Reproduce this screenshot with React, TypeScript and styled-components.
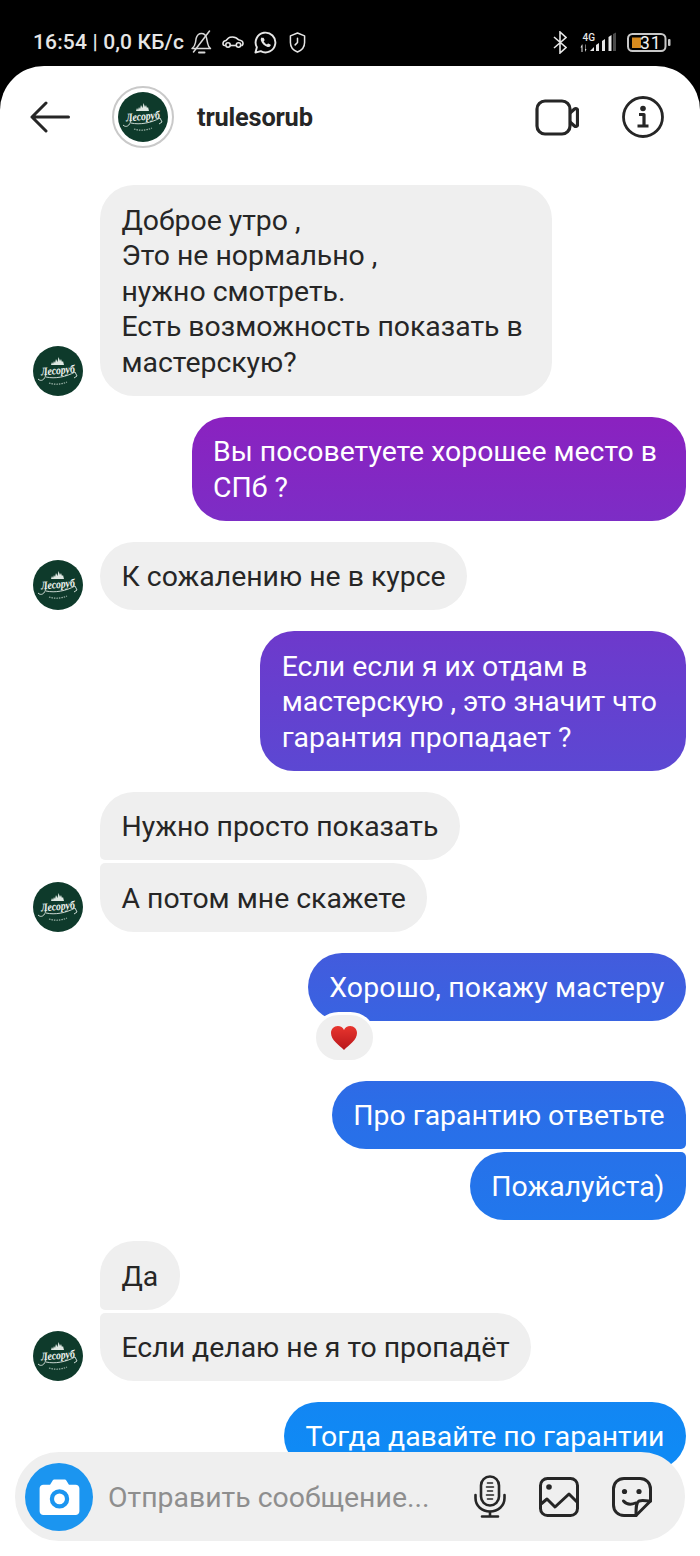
import React from 'react';
import styled, { createGlobalStyle } from 'styled-components';

const GlobalStyle = createGlobalStyle`
  html, body {
    margin: 0;
    padding: 0;
    background: #000;
  }
  * {
    box-sizing: border-box;
  }
`;

const Phone = styled.div`
  position: relative;
  width: 700px;
  height: 1556px;
  overflow: hidden;
  display: flex;
  flex-direction: column;
  background: #000;
  font-family: Roboto, 'Noto Sans', sans-serif;
`;

const StatusBar = styled.div`
  flex: none;
  height: 66px;
  padding: 18px 29px 0 33px;
  display: flex;
  align-items: center;
  color: #e6e6e6;
`;

const StatusText = styled.span`
  font-size: 21px;
  font-weight: 500;
  letter-spacing: 0.15px;
  white-space: nowrap;
  margin-right: 6px;
`;

const StatusIcons = styled.div`
  display: flex;
  align-items: center;
  gap: 10px;
`;

const StatusRight = styled.div`
  margin-left: auto;
  display: flex;
  align-items: center;
  gap: 13px;
`;

const Cellular = styled.div`
  display: flex;
  align-items: center;
  gap: 10px;
`;

const Screen = styled.div`
  flex: 1;
  min-height: 0;
  display: flex;
  flex-direction: column;
  background: #fff;
  border-radius: 44px 44px 0 0;
`;

const Header = styled.div`
  flex: none;
  height: 119.4px;
  padding: 0 36px 17px 30px;
  display: flex;
  align-items: center;
`;

const BackButton = styled.div`
  width: 40px;
  height: 32px;
  margin-right: 42px;
`;

const HeaderRing = styled.div`
  width: 62px;
  height: 62px;
  border-radius: 50%;
  border: 2px solid #c9c9c9;
  display: flex;
  align-items: center;
  justify-content: center;
  margin-right: 23px;
`;

const UserName = styled.span`
  font-size: 25.4px;
  font-weight: 700;
  color: #262626;
  letter-spacing: -0.2px;
`;

const HeaderActions = styled.div`
  margin-left: auto;
  display: flex;
  align-items: center;
  gap: 43px;
`;

const Thread = styled.div`
  flex: 1;
  min-height: 0;
  overflow: hidden;
  display: flex;
  flex-direction: column;
  padding: 0 14px 0 33px;
`;

const Group = styled.div<{ $sent?: boolean }>`
  flex: none;
  display: flex;
  flex-direction: column;
  gap: 3px;
  align-items: ${({ $sent }) => ($sent ? 'flex-end' : 'flex-start')};
  margin-bottom: 21px;
`;

const Row = styled.div`
  display: flex;
  align-items: flex-end;
  gap: 17px;
`;

const Spacer = styled.div`
  width: 50px;
  height: 0;
`;

const radius = (corner?: 'top' | 'bottom', sent?: boolean) => {
  const big = '34px';
  const small = '5px';
  if (sent) {
    return `${big} ${corner === 'top' ? small : big} ${corner === 'bottom' ? small : big} ${big}`;
  }
  return `${corner === 'top' ? small : big} ${big} ${big} ${corner === 'bottom' ? small : big}`;
};

// $wrapped: the multi-line bubbles keep the wider box they had before wrapping
const Bubble = styled.div<{ $sent?: boolean; $corner?: 'top' | 'bottom'; $wrapped?: boolean; $tracking?: number }>`
  padding: 17.2px ${({ $wrapped }) => ($wrapped ? '29px' : '21.5px')} 15.6px 21.5px;
  font-size: 28.4px;
  line-height: 35.6px;
  letter-spacing: ${({ $tracking }) => $tracking ?? 0}px;
  white-space: pre-wrap;
  color: ${({ $sent }) => ($sent ? '#fff' : '#262626')};
  border-radius: ${({ $corner, $sent }) => radius($corner, $sent)};
  background: ${({ $sent }) =>
    $sent
      ? 'linear-gradient(180deg, #9a12ba 0px, #8a22c0 420px, #6a3ccd 660px, #4b55d9 900px, #2a6ee8 1110px, #0f8af5 1450px) fixed'
      : '#efefef'};
`;

const SentWithReaction = styled.div`
  display: flex;
  flex-direction: column;
  align-items: flex-start;
`;

const Reaction = styled.div`
  margin: -9px 0 -3.6px 5px;
  width: 63px;
  height: 51px;
  border-radius: 26px;
  border: 3px solid #fff;
  background: #efefef;
  display: flex;
  align-items: center;
  justify-content: center;
  position: relative;
`;

const Composer = styled.div`
  position: absolute;
  left: 15px;
  right: 15px;
  top: 1452px;
  height: 89px;
  border-radius: 44px;
  background: #efefef;
  display: flex;
  align-items: center;
  padding: 0 33px 0 10px;
`;

const CameraButton = styled.div`
  width: 68px;
  height: 68px;
  border-radius: 50%;
  background: #1b95f0;
  display: flex;
  align-items: center;
  justify-content: center;
  margin-right: 15px;
`;

const Placeholder = styled.span`
  flex: 1;
  padding-top: 2px;
  font-size: 28.4px;
  color: #8e8e8e;
  white-space: nowrap;
`;

const ComposerActions = styled.div`
  display: flex;
  align-items: center;
  gap: 33px;
`;

const Logo = ({ size }: { size: number }) => (
  <svg width={size} height={size} viewBox="0 0 50 50">
    <circle cx="25" cy="25" r="25" fill="#0e3a2b" />
    <path
      d="M18 19l1-3 1 2 1-3 1 2 1-4 1.500 3 1-5 1.500 4 1-2 1 3 1-1 1 4z"
      fill="#dfe8e3"
    />
    <text
      x="25"
      y="28"
      textAnchor="middle"
      fontFamily="'Liberation Serif', serif"
      fontStyle="italic"
      fontWeight="700"
      fontSize="11.500"
      textLength="34"
      lengthAdjust="spacingAndGlyphs"
      transform="rotate(-5 25 27)"
      fill="#eef3f0"
    >
      Лесоруб
    </text>
    <path
      d="M5 33c3 3 7 1 8-5M13 31c9 2 20 0 29-5l2 4-3 2"
      fill="none"
      stroke="#dfe8e3"
      strokeWidth="0.9"
    />
    <path d="M16 37c6 2 12 1.500 18-1" fill="none" stroke="#9fb6ab" strokeWidth="1.2" strokeDasharray="1.500 1" />
  </svg>
);

const Avatar = () => <Logo size={50} />;

const BellOff = () => (
  <svg width="22" height="24" viewBox="0 0 22 24" fill="none" stroke="#d8d8d8" strokeWidth="1.500" strokeLinejoin="round">
    <path d="M2 18.500c2-1.500 3-3 3.500-6l.6-4C7 5 9 3.500 11.500 3.500c2.500 0 4.300 1.500 5 4.500l1.200 5.500c.4 2.500 1.300 3.800 2.800 5z" />
    <path d="M9 22.500h5.500" strokeWidth="2" strokeLinecap="round" />
    <path d="M3.500 22L19.500 1" strokeLinecap="round" />
  </svg>
);

const Car = () => (
  <svg width="22" height="12" viewBox="0 0 22 12" fill="none" stroke="#e6e6e6" strokeWidth="1.600">
    <path d="M3.500 9.500H2.500C1.200 9.500 1 8.500 1 7.500 1 5.500 2.500 4.800 4 4.500l2.500-2.500C7.500 1 9 1 10.500 1c3 0 4.500 1 6 2.800 2.500.5 4.500 1 4.500 3.400 0 1.500-.5 2.300-1.800 2.300" />
    <circle cx="6" cy="9" r="2.200" />
    <circle cx="16.500" cy="9" r="2.200" />
    <path d="M8.200 9.500h6" />
  </svg>
);

const WhatsApp = () => (
  <svg width="23" height="23" viewBox="0 0 24 24" fill="none">
    <path
      d="M1.500 22.500l1.500-5.500a10.300 10.300 0 1 1 4 4z"
      stroke="#e6e6e6"
      strokeWidth="2"
      strokeLinejoin="round"
    />
    <path
      d="M8.300 6.500c-1.200.8-1.500 2.200-1 3.700 1 2.800 3.500 5.300 6.300 6.300 1.500.5 2.900.2 3.700-1 .3-.5.200-1-.2-1.300l-1.800-1c-.4-.2-.8-.1-1 .2l-.7.8c-1.500-.6-2.800-1.900-3.500-3.400l.8-.8c.3-.3.3-.6.1-1l-.9-1.700c-.5-.5-1.200-.3-1.800 0z"
      fill="#e6e6e6"
    />
  </svg>
);

const ShieldClock = () => (
  <svg
    width="17"
    height="21"
    viewBox="0 0 18 22"
    fill="none"
    stroke="#e6e6e6"
    strokeWidth="1.600"
    strokeLinejoin="round"
    style={{ marginLeft: 2 }}
  >
    <path d="M9 1l7.500 3v7c0 5-3.500 8.500-7.500 10C5 19.500 1.500 16 1.500 11V4z" />
    <path d="M9 6.500V11l-2.500 2.500" strokeLinecap="round" />
  </svg>
);

const Bluetooth = () => (
  <svg width="14" height="23" viewBox="0 0 14 23" fill="none" stroke="#e6e6e6" strokeWidth="1.600">
    <path d="M1 6l12 10.500L7 22V1l6 5.500L1 17" />
  </svg>
);

const Signal = () => (
  <svg width="37" height="21" viewBox="0 0 37 21">
    <path d="M2 12.500l-1.500 3h1V20h1v-7.500zM5 12.500V20l1.500-3h-1v-4.500z" fill="#e6e6e6" />
    <path d="M10 19l4-4v4zM16 19v-6l3-2v8zM22 19V9l3-2v12zM28.500 19V5l3-2v16z" fill="#e6e6e6" />
    <path d="M33 19V2l3-1.500V19z" fill="#4a4a4a" />
    <text x="2.500" y="8.500" fontFamily="Roboto, sans-serif" fontWeight="500" fontSize="10" fill="#e6e6e6">
      4G
    </text>
  </svg>
);

const Battery = () => (
  <svg width="44" height="19" viewBox="0 0 44 19">
    <rect x="1" y="1" width="37.500" height="17" rx="4.500" fill="none" stroke="#c8c8c8" strokeWidth="2" />
    <rect x="5" y="4.500" width="9" height="10.500" fill="#d68a1e" />
    <rect x="41" y="6" width="2.500" height="7" rx="1" fill="#c8c8c8" />
    <text x="13" y="15.500" fontFamily="Roboto, sans-serif" fontSize="17.500" letterSpacing="1" fill="#f2f2f2">
      31
    </text>
  </svg>
);

const BackArrow = () => (
  <svg width="40" height="32" viewBox="0 0 40 32" fill="none" stroke="#262626" strokeWidth="3" strokeLinecap="round" strokeLinejoin="round">
    <path d="M38.500 16H2M16 2L2 16l14 14" />
  </svg>
);

const VideoIcon = () => (
  <svg width="44" height="37" viewBox="0 0 44 37" fill="none" stroke="#262626" strokeWidth="3.200" strokeLinejoin="round">
    <rect x="2" y="2" width="33" height="33" rx="8" />
    <path d="M35 14l4.500-4c1.200-1 3-.3 3 1.200v14.600c0 1.500-1.800 2.200-3 1.200L35 23" />
  </svg>
);

const InfoIcon = () => (
  <svg width="42" height="42" viewBox="0 0 42 42" fill="none">
    <circle cx="21" cy="21" r="19.500" stroke="#262626" strokeWidth="2.800" />
    <circle cx="21" cy="12.500" r="2.800" fill="#262626" />
    <path d="M17 18.500h5v11M15.500 30h11" stroke="#262626" strokeWidth="3.200" strokeLinejoin="round" />
  </svg>
);

const Heart = () => (
  <svg width="26" height="24" viewBox="0 0 26 24">
    <defs>
      <linearGradient id="heart" x1="0" y1="0" x2="0" y2="1">
        <stop offset="0" stopColor="#e8352e" />
        <stop offset="1" stopColor="#b8161b" />
      </linearGradient>
    </defs>
    <path
      d="M13 24C8 19 0 14 0 7c0-4 3-7 6.800-7C9.500 0 12 1.500 13 4c1-2.500 3.500-4 6.200-4C23 0 26 3 26 7c0 7-8 12-13 17z"
      fill="url(#heart)"
    />
  </svg>
);

const CameraIcon = () => (
  <svg width="41" height="36" viewBox="0 0 42 38">
    <path
      d="M4 6h7l2.500-4c.5-1 1.500-1.500 2.500-1.500h10c1 0 2 .5 2.500 1.500L31 6h7c2.200 0 4 1.800 4 4v24c0 2.200-1.800 4-4 4H4c-2.200 0-4-1.800-4-4V10c0-2.200 1.800-4 4-4z"
      fill="#fff"
    />
    <circle cx="21" cy="21" r="8" fill="#fff" stroke="#1b95f0" strokeWidth="4.500" />
  </svg>
);

const MicIcon = () => (
  <svg width="32" height="43" viewBox="0 0 32 43" fill="none" stroke="#262626" strokeLinecap="round">
    <rect x="7" y="1.500" width="18" height="29" rx="9" strokeWidth="2.600" />
    <path d="M13.500 8h5M12.500 12h7M13.500 16h5M12.500 20h7M13.500 24h5" strokeWidth="1.600" />
    <path d="M1.500 20v3c0 8 6.500 13.500 14.500 13.500S30.500 31 30.500 23v-3" strokeWidth="2.600" />
    <path d="M16 37v4.500M8 41.500h16" strokeWidth="2.600" />
  </svg>
);

const ImageIcon = () => (
  <svg width="40" height="40" viewBox="0 0 40 40" fill="none" stroke="#262626" strokeWidth="3" strokeLinejoin="round">
    <rect x="1.500" y="1.500" width="37" height="37" rx="7" />
    <circle cx="10" cy="10" r="2.800" fill="#262626" stroke="none" />
    <path d="M2 27l6-5 8 8 14-13 8 8" />
  </svg>
);

const StickerIcon = () => (
  <svg width="40" height="40" viewBox="0 0 40 40" fill="none" stroke="#262626" strokeWidth="3" strokeLinecap="round" strokeLinejoin="round">
    <path d="M24 38.500H12c-6 0-10.500-4.500-10.500-10.500V12C1.500 6 6 1.500 12 1.500h16C34 1.500 38.500 6 38.500 12v12z" />
    <path d="M24 38.500c0-8 0-13 3-14.500 3-1 7 0 11.500 0" />
    <path d="M11.500 24c3 3.500 7.500 4 12 2" />
    <circle cx="12.500" cy="14.500" r="2.600" fill="#262626" stroke="none" />
    <circle cx="27" cy="14.500" r="2.600" fill="#262626" stroke="none" />
  </svg>
);

const App = () => (
  <Phone>
    <GlobalStyle />
    <StatusBar>
      <StatusText>16:54 | 0,0 КБ/с</StatusText>
      <StatusIcons>
        <BellOff />
        <Car />
        <WhatsApp />
        <ShieldClock />
      </StatusIcons>
      <StatusRight>
        <Bluetooth />
        <Cellular>
          <Signal />
          <Battery />
        </Cellular>
      </StatusRight>
    </StatusBar>
    <Screen>
      <Header>
        <BackButton>
          <BackArrow />
        </BackButton>
        <HeaderRing>
          <Logo size={50} />
        </HeaderRing>
        <UserName>trulesorub</UserName>
        <HeaderActions>
          <VideoIcon />
          <InfoIcon />
        </HeaderActions>
      </Header>
      <Thread>
        <Group>
          <Row>
            <Avatar />
            <Bubble $wrapped>
              {'Доброе утро ,\nЭто не нормально ,\nнужно смотреть.\nЕсть возможность показать в\nмастерскую?'}
            </Bubble>
          </Row>
        </Group>
        <Group $sent>
          <Bubble $sent $wrapped>{'Вы посоветуете хорошее место в\nСПб ?'}</Bubble>
        </Group>
        <Group>
          <Row>
            <Avatar />
            <Bubble>К сожалению не в курсе</Bubble>
          </Row>
        </Group>
        <Group $sent>
          <Bubble $sent $wrapped>{'Если если я их отдам в\nмастерскую , это значит что\nгарантия пропадает ?'}</Bubble>
        </Group>
        <Group>
          <Row>
            <Spacer />
            <Bubble $corner="bottom">Нужно просто показать</Bubble>
          </Row>
          <Row>
            <Avatar />
            <Bubble $corner="top">А потом мне скажете</Bubble>
          </Row>
        </Group>
        <Group $sent>
          <SentWithReaction>
            <Bubble $sent $tracking={0.18}>Хорошо, покажу мастеру</Bubble>
            <Reaction>
              <Heart />
            </Reaction>
          </SentWithReaction>
        </Group>
        <Group $sent>
          <Bubble $sent $corner="bottom">Про гарантию ответьте</Bubble>
          <Bubble $sent $corner="top">Пожалуйста)</Bubble>
        </Group>
        <Group>
          <Row>
            <Spacer />
            <Bubble $corner="bottom">Да</Bubble>
          </Row>
          <Row>
            <Avatar />
            <Bubble $corner="top">Если делаю не я то пропадёт</Bubble>
          </Row>
        </Group>
        <Group $sent>
          <Bubble $sent>Тогда давайте по гарантии</Bubble>
        </Group>
      </Thread>
    </Screen>
    <Composer>
      <CameraButton>
        <CameraIcon />
      </CameraButton>
      <Placeholder>Отправить сообщение...</Placeholder>
      <ComposerActions>
        <MicIcon />
        <ImageIcon />
        <StickerIcon />
      </ComposerActions>
    </Composer>
  </Phone>
);

export default App;
